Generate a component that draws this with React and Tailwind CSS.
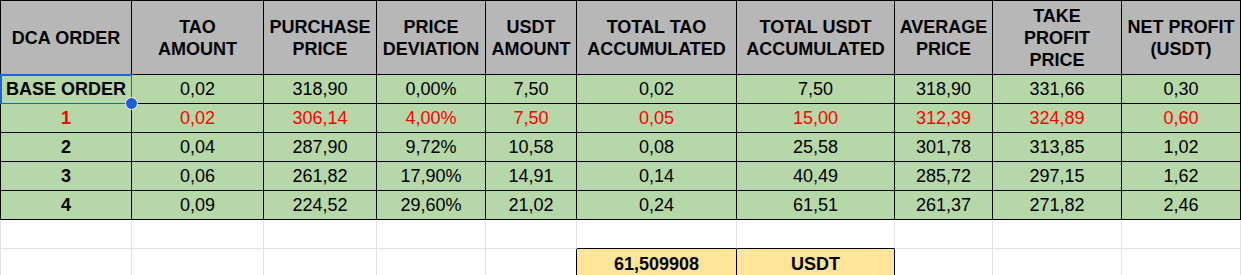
import React from "react";

const cols = "grid grid-cols-[132px_132px_113px_109px_91px_160px_158px_98px_129px_119px]";

const headers = [
  ["DCA ORDER"],
  ["TAO", "AMOUNT"],
  ["PURCHASE", "PRICE"],
  ["PRICE", "DEVIATION"],
  ["USDT", "AMOUNT"],
  ["TOTAL TAO", "ACCUMULATED"],
  ["TOTAL USDT", "ACCUMULATED"],
  ["AVERAGE", "PRICE"],
  ["TAKE", "PROFIT", "PRICE"],
  ["NET PROFIT", "(USDT)"],
];

const rows = [
  { red: false, cells: ["BASE ORDER", "0,02", "318,90", "0,00%", "7,50", "0,02", "7,50", "318,90", "331,66", "0,30"] },
  { red: true, cells: ["1", "0,02", "306,14", "4,00%", "7,50", "0,05", "15,00", "312,39", "324,89", "0,60"] },
  { red: false, cells: ["2", "0,04", "287,90", "9,72%", "10,58", "0,08", "25,58", "301,78", "313,85", "1,02"] },
  { red: false, cells: ["3", "0,06", "261,82", "17,90%", "14,91", "0,14", "40,49", "285,72", "297,15", "1,62"] },
  { red: false, cells: ["4", "0,09", "224,52", "29,60%", "21,02", "0,24", "61,51", "261,37", "271,82", "2,46"] },
];

export default function App() {
  return (
    <div className="w-[1241px] h-[275px] overflow-hidden bg-white text-black font-['Liberation_Sans',Arial,sans-serif] text-[18px]">
      {/* header */}
      <div className={cols}>
        {headers.map((h, i) => (
          <div
            key={i}
            className={
              "h-[75px] bg-[#b7b7b7] border-t border-b border-r border-black flex flex-col items-center justify-center font-bold leading-[22px] text-center" +
              (i === 0 ? " border-l" : "")
            }
          >
            {h.map((l, j) => (
              <span key={j} className="whitespace-nowrap">{l}</span>
            ))}
          </div>
        ))}
      </div>
      {rows.map((r, ri) => (
        <div key={ri} className={cols}>
          {r.cells.map((c, ci) => (
            <div
              key={ci}
              className={
                "relative h-[29px] bg-[#b6d7a8] border-b border-r border-black flex items-center justify-center leading-none whitespace-nowrap" +
                (ci === 0 ? " border-l font-bold" : "") +
                (r.red ? " text-[#ff0000]" : "")
              }
            >
              {c}
              {ri === 0 && ci === 0 && (
                <>
                  <div className="absolute -left-px -top-px -right-[2px] -bottom-[2px] border-2 border-[#1a66d9]" />
                  <div className="absolute -right-[7px] -bottom-[7px] w-[13px] h-[13px] rounded-full bg-[#1a5fd6] border border-white z-10" />
                </>
              )}
            </div>
          ))}
        </div>
      ))}
      {/* empty row */}
      <div className={cols}>
        {Array.from({ length: 10 }).map((_, i) => (
          <div
            key={i}
            className={
              "h-[29px] border-r border-b border-[#e2e2e2]" +
              (i === 0 ? " border-l" : "") +
              (i === 5 || i === 6 ? " border-b-black" : "")
            }
          />
        ))}
      </div>
      {/* total row */}
      <div className={cols}>
        {Array.from({ length: 10 }).map((_, i) => {
          if (i === 5)
            return (
              <div key={i} className="h-[29px] bg-[#ffe599] border-r border-black flex items-center justify-center font-bold leading-none">
                61,509908
              </div>
            );
          if (i === 6)
            return (
              <div key={i} className="h-[29px] bg-[#ffe599] border-r border-black flex items-center justify-center font-bold leading-none">
                USDT
              </div>
            );
          return (
            <div
              key={i}
              className={
                "h-[29px] border-r border-[#e2e2e2]" +
                (i === 0 ? " border-l" : "") +
                (i === 4 ? " border-r-black" : "")
              }
            />
          );
        })}
      </div>
    </div>
  );
}
